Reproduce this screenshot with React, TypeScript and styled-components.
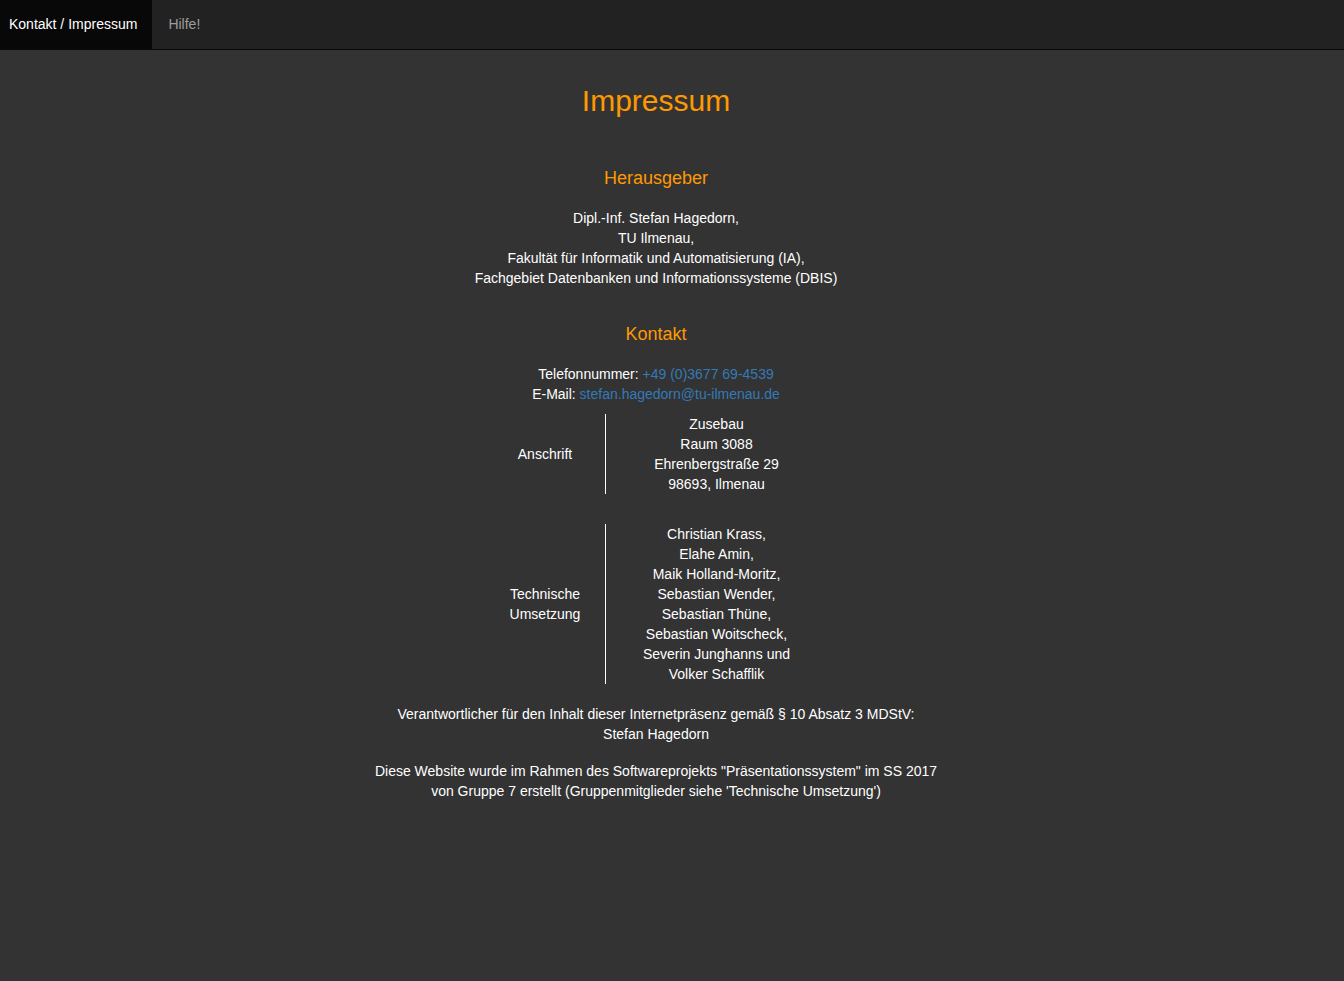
import styled, { createGlobalStyle } from "styled-components";

const GlobalStyle = createGlobalStyle`
  html, body {
    margin: 0;
    padding: 0;
    background: #333333;
    min-height: 100%;
  }
  body {
    font-family: "Liberation Sans", Arial, Helvetica, sans-serif;
    font-size: 14px;
    line-height: 20px;
    color: #ffffff;
  }
`;

// Obere Navigationsleiste
const NavBar = styled.nav`
  display: flex;
  height: 49px;
  background: #222222;
  border-bottom: 1px solid #080808;
`;

const NavItem = styled.a<{ active?: boolean }>`
  display: block;
  padding: 14px 15px 15px ${({ active }) => (active ? "9px" : "16px")};
  line-height: 20px;
  font-size: 14px;
  text-decoration: none;
  color: ${({ active }) => (active ? "#ffffff" : "#9d9d9d")};
  background: ${({ active }) => (active ? "#080808" : "transparent")};
  cursor: pointer;
`;

// Inhalt
const Page = styled.main`
  margin-right: 32px;
  text-align: center;
  padding-bottom: 40px;
`;

const Title = styled.h1`
  margin: 34px 0 0;
  font-size: 30px;
  line-height: 33px;
  font-weight: 400;
  color: #ff9900;
`;

const SectionTitle = styled.h3<{ gap: number }>`
  margin: ${({ gap }) => gap}px 0 20px;
  font-size: 18px;
  line-height: 20px;
  font-weight: 400;
  color: #ff9900;
`;

const Paragraph = styled.p<{ top?: number }>`
  margin: ${({ top }) => top ?? 0}px 0 0;
`;

const Link = styled.a`
  color: #337ab7;
  text-decoration: none;
`;

const InfoTable = styled.div`
  display: grid;
  grid-template-columns: 120px 222px;
  row-gap: 30px;
  justify-content: center;
  margin-top: 10px;
`;

const Label = styled.div`
  display: flex;
  align-items: center;
  justify-content: center;
  padding: 0 10px;
`;

const Value = styled.div`
  border-left: 1px solid #ffffff;
`;

const addressLines = ["Zusebau", "Raum 3088", "Ehrenbergstraße 29", "98693, Ilmenau"];

const teamLines = [
  "Christian Krass,",
  "Elahe Amin,",
  "Maik Holland-Moritz,",
  "Sebastian Wender,",
  "Sebastian Thüne,",
  "Sebastian Woitscheck,",
  "Severin Junghanns und",
  "Volker Schafflik",
];

function Lines({ items }: { items: string[] }) {
  return (
    <>
      {items.map((line, i) => (
        <span key={line}>
          {line}
          {i < items.length - 1 && <br />}
        </span>
      ))}
    </>
  );
}

export default function App() {
  return (
    <>
      <GlobalStyle />
      <NavBar>
        <NavItem active>Kontakt / Impressum</NavItem>
        <NavItem>Hilfe!</NavItem>
      </NavBar>

      <Page>
        <Title>Impressum</Title>

        <SectionTitle gap={51}>Herausgeber</SectionTitle>
        <Paragraph>
          Dipl.-Inf. Stefan Hagedorn,
          <br />
          TU Ilmenau,
          <br />
          Fakultät für Informatik und Automatisierung (IA),
          <br />
          Fachgebiet Datenbanken und Informationssysteme (DBIS)
        </Paragraph>

        <SectionTitle gap={36}>Kontakt</SectionTitle>
        <Paragraph>
          Telefonnummer: <Link href="#">+49 (0)3677 69-4539</Link>
          <br />
          E-Mail: <Link href="#">stefan.hagedorn@tu-ilmenau.de</Link>
        </Paragraph>

        <InfoTable>
          <Label>Anschrift</Label>
          <Value>
            <Lines items={addressLines} />
          </Value>
          <Label>Technische Umsetzung</Label>
          <Value>
            <Lines items={teamLines} />
          </Value>
        </InfoTable>

        <Paragraph top={20}>
          Verantwortlicher für den Inhalt dieser Internetpräsenz gemäß § 10 Absatz 3 MDStV:
          <br />
          Stefan Hagedorn
        </Paragraph>
        <Paragraph top={17}>
          Diese Website wurde im Rahmen des Softwareprojekts "Präsentationssystem" im SS 2017
          <br />
          von Gruppe 7 erstellt (Gruppenmitglieder siehe 'Technische Umsetzung')
        </Paragraph>
      </Page>
    </>
  );
}
